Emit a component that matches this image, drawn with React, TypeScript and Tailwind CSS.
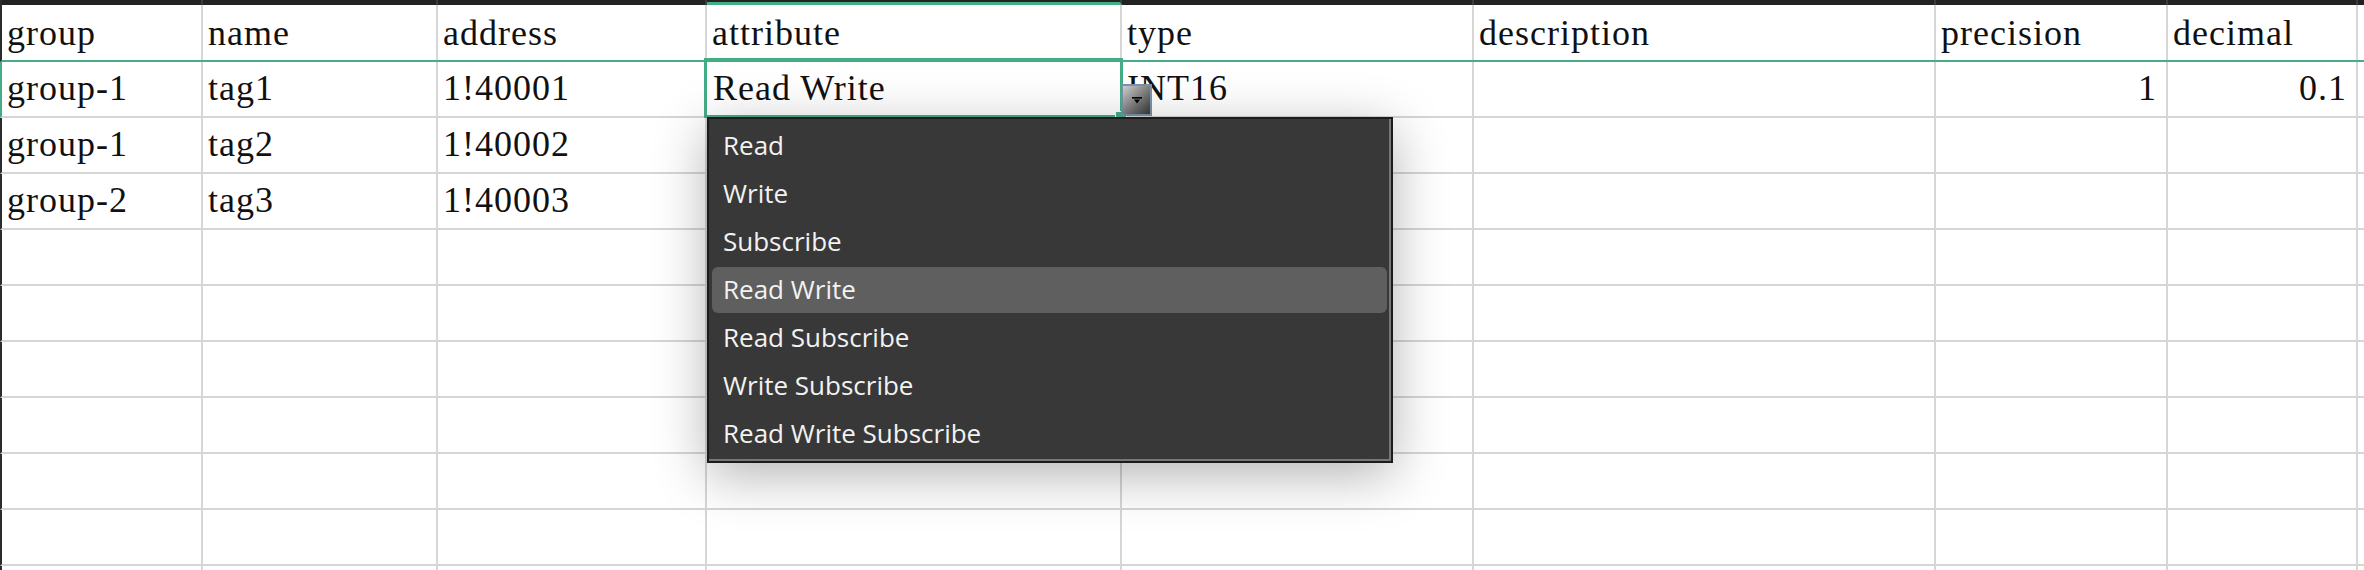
import { useState } from "react";

type Row = {
  group: string;
  name: string;
  address: string;
  attribute: string;
  type: string;
  description: string;
  precision: string;
  decimal: string;
};

const columns = [
  { key: "group", label: "group", width: "w-[201px]", align: "left" },
  { key: "name", label: "name", width: "w-[235px]", align: "left" },
  { key: "address", label: "address", width: "w-[269px]", align: "left" },
  { key: "attribute", label: "attribute", width: "w-[415px]", align: "left" },
  { key: "type", label: "type", width: "w-[352px]", align: "left" },
  { key: "description", label: "description", width: "w-[462px]", align: "left" },
  { key: "precision", label: "precision", width: "w-[232px]", align: "right" },
  { key: "decimal", label: "decimal", width: "w-[190px]", align: "right" },
  { key: "extra", label: "", width: "w-[200px]", align: "left" },
] as const;

// rows 2 and 3 sit under the open list, so their attribute / type cells stay blank here
const rows: Row[] = [
  { group: "group-1", name: "tag1", address: "1!40001", attribute: "Read Write", type: "INT16", description: "", precision: "1", decimal: "0.1" },
  { group: "group-1", name: "tag2", address: "1!40002", attribute: "", type: "", description: "", precision: "", decimal: "" },
  { group: "group-2", name: "tag3", address: "1!40003", attribute: "", type: "", description: "", precision: "", decimal: "" },
];

// pad the sheet with blank rows so it fills the window
const emptyRow: Row = { group: "", name: "", address: "", attribute: "", type: "", description: "", precision: "", decimal: "" };
const allRows = [...rows, ...Array.from({ length: 7 }, () => emptyRow)];

const attributeOptions = [
  "Read",
  "Write",
  "Subscribe",
  "Read Write",
  "Read Subscribe",
  "Write Subscribe",
  "Read Write Subscribe",
];

export default function App() {
  const [selected, setSelected] = useState("Read Write");
  const [open, setOpen] = useState(true);

  return (
    <div className="relative w-[2364px] h-[570px] overflow-hidden bg-white font-['Liberation_Serif',serif] text-[#111]">
      {/* top strip */}
      <div className="flex h-[5px] bg-[#222] border-l-2 border-[#2b2b2b]">
        {columns.map((col) => (
          <div
            key={col.key}
            className={`${col.width} shrink-0 h-full border-r-2 border-[#3a3a3a] ${
              col.key === "attribute" ? "border-b-[3px] border-b-[#45ad86]" : ""
            }`}
          />
        ))}
      </div>

      {/* header */}
      <div className="flex h-[57px] border-l-2 border-[#2b2b2b] border-b-2 border-b-[#45ad86]">
        {columns.map((col) => (
          <div
            key={col.key}
            className={`${col.width} shrink-0 h-full border-r-2 border-[#d6d6d6] pl-[5px] pt-[8px] text-[36px] leading-[40px] tracking-[1px]`}
          >
            {col.label}
          </div>
        ))}
      </div>

      {/* body */}
      {allRows.map((row, i) => (
        <div
          key={i}
          className={`flex h-[56px] border-b-2 border-b-[#d6d6d6] border-l-2 ${
            i === 0 ? "border-l-[#45ad86]" : "border-l-[#2b2b2b]"
          }`}
        >
          {columns.map((col) => {
            const value = col.key === "extra" ? "" : row[col.key];
            return (
              <div
                key={col.key}
                className={`${col.width} shrink-0 h-full border-r-2 border-[#d6d6d6] pt-[6px] text-[36px] leading-[40px] tracking-[1px] whitespace-nowrap overflow-hidden ${
                  col.align === "right" ? "text-right pr-[9px]" : "pl-[5px]"
                } ${col.key === "attribute" && i === 0 ? "pl-[6px]" : ""}`}
              >
                {col.key === "attribute" && i === 0 ? selected : value}
              </div>
            );
          })}
        </div>
      ))}

      {/* active cell outline */}
      <div className="absolute left-[704px] top-[58px] w-[419px] h-[60px] border-[3px] border-[#45ad86] pointer-events-none" />
      <div className="absolute left-[1115px] top-[111px] w-[12px] h-[8px] bg-[#45ad86] border border-white" />

      {/* dropdown trigger */}
      <button
        onClick={() => setOpen(!open)}
        className="absolute left-[1121px] top-[84px] w-[31px] h-[32px] border-2 border-[#7b93ab] bg-linear-to-br from-[#d2d2d2] to-[#3a3a3a] flex items-center justify-center"
      >
        <svg width="10" height="7" viewBox="0 0 10 7">
          <rect x="0" y="0" width="10" height="1.6" fill="#000" />
          <polygon points="2,2.4 8,2.4 5,6.6" fill="#000" />
        </svg>
      </button>

      {/* option list */}
      {open && (
        <div className="absolute left-[707px] top-[117px] w-[686px] h-[346px] border-2 border-[#1c1c1c] bg-[#383838] shadow-[0_12px_50px_rgba(0,0,0,0.3)] font-['Open_Sans',sans-serif]">
          <div className="h-full border-r-2 border-b-2 border-[#777] p-[3px] pr-[2px] pb-[2px]">
            {attributeOptions.map((opt) => (
              <div key={opt} className="h-[48px] py-[1px]">
                <div
                  onClick={() => {
                    setSelected(opt);
                    setOpen(false);
                  }}
                  className={`h-[46px] pl-[11px] pb-[2px] flex items-center rounded-[6px] text-[26px] text-[#f2f2f2] cursor-default ${
                    opt === selected ? "bg-[#5f5f5f]" : ""
                  }`}
                >
                  {opt}
                </div>
              </div>
            ))}
          </div>
        </div>
      )}
    </div>
  );
}
